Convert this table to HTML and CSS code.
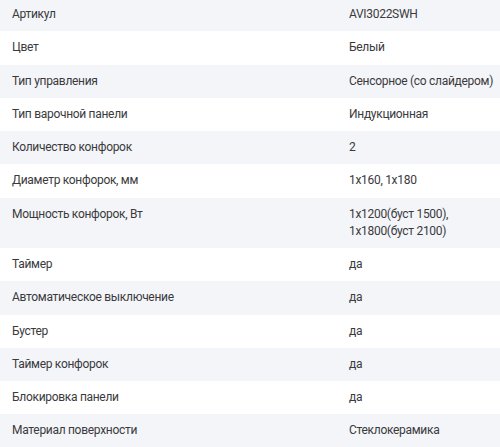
FILE: index.html
```html
<!DOCTYPE html>
<html lang="ru">
<head>
<meta charset="utf-8">
<link rel="stylesheet" href="styles.css">
</head>
<body>
<div class="specs">
  <div class="row"><div class="label">Артикул</div><div class="value">AVI3022SWH</div></div>
  <div class="row"><div class="label">Цвет</div><div class="value">Белый</div></div>
  <div class="row"><div class="label">Тип управления</div><div class="value">Сенсорное (со слайдером)</div></div>
  <div class="row"><div class="label">Тип варочной панели</div><div class="value">Индукционная</div></div>
  <div class="row"><div class="label">Количество конфорок</div><div class="value">2</div></div>
  <div class="row"><div class="label">Диаметр конфорок, мм</div><div class="value">1x160, 1x180</div></div>
  <div class="row"><div class="label">Мощность конфорок, Вт</div><div class="value">1x1200(буст 1500),<br>1x1800(буст 2100)</div></div>
  <div class="row"><div class="label">Таймер</div><div class="value">да</div></div>
  <div class="row"><div class="label">Автоматическое выключение</div><div class="value">да</div></div>
  <div class="row"><div class="label">Бустер</div><div class="value">да</div></div>
  <div class="row"><div class="label">Таймер конфорок</div><div class="value">да</div></div>
  <div class="row"><div class="label">Блокировка панели</div><div class="value">да</div></div>
  <div class="row"><div class="label">Материал поверхности</div><div class="value">Стеклокерамика</div></div>
</div>
</body>
</html>
```
FILE: styles.css
```css
html, body {
  margin: 0;
  padding: 0;
  background: #ffffff;
}
body {
  font-family: Roboto, "Noto Sans", sans-serif;
  font-size: 12px;
  letter-spacing: -0.3px;
  color: #3a3a3c;
  overflow: hidden;
}
.specs {
  margin-top: -2px;
}
.row {
  display: grid;
  grid-template-columns: 349px 1fr;
  padding: 8px 0;
  line-height: 17.25px;
}
.row:nth-child(odd) {
  background: #f4f5f9;
}
.label {
  padding-left: 12px;
  white-space: nowrap;
}
.value {
  white-space: nowrap;
}
```
